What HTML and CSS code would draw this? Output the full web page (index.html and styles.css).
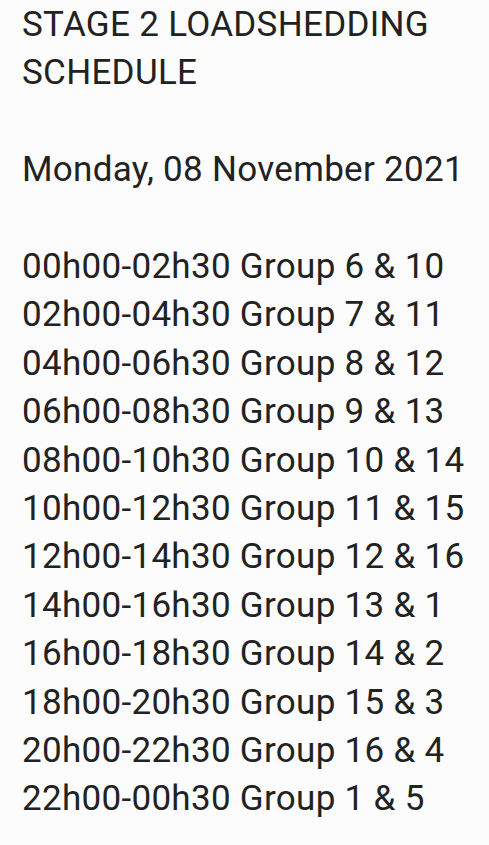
FILE: index.html
```html
<!DOCTYPE html>
<html lang="en">
<head>
  <meta charset="utf-8">
  <title>Loadshedding Schedule</title>
  <link rel="stylesheet" href="styles.css">
</head>
<body>
    <div class="container">
        <p class="title">STAGE 2 LOADSHEDDING<br/>SCHEDULE</p>
        <p class="date">Monday, 08 November 2021</p>
        <div class="schedule">
            <div class="slot">00h00-02h30 Group 6 &amp; 10</div>
            <div class="slot">02h00-04h30 Group 7 &amp; 11</div>
            <div class="slot">04h00-06h30 Group 8 &amp; 12</div>
            <div class="slot">06h00-08h30 Group 9 &amp; 13</div>
            <div class="slot">08h00-10h30 Group 10 &amp; 14</div>
            <div class="slot">10h00-12h30 Group 11 &amp; 15</div>
            <div class="slot">12h00-14h30 Group 12 &amp; 16</div>
            <div class="slot">14h00-16h30 Group 13 &amp; 1</div>
            <div class="slot">16h00-18h30 Group 14 &amp; 2</div>
            <div class="slot">18h00-20h30 Group 15 &amp; 3</div>
            <div class="slot">20h00-22h30 Group 16 &amp; 4</div>
            <div class="slot">22h00-00h30 Group 1 &amp; 5</div>
        </div>
    </div>
</body>
</html>
```

FILE: styles.css
```css
body {
    margin: 0;
    background: #fcfcfc;
    color: #222222;
    font-family: Roboto, "Noto Sans", sans-serif;
    font-size: 35px;
    line-height: 48.4px;
    letter-spacing: 0.3px;
}
.container {
    padding: 1px 0 0 22px;
}
p {
    margin: 0 0 48.4px 0;
}
.slot {
    white-space: nowrap;
}
```
